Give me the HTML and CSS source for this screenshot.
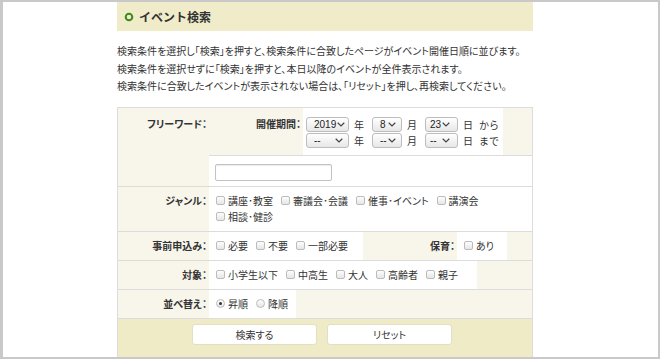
FILE: index.html
```html
<!DOCTYPE html>
<html lang="ja">
<head>
<meta charset="utf-8">
<title>イベント検索</title>
<link rel="stylesheet" href="styles.css">
</head>
<body>
<div class="frame">
  <div class="panel">
    <h2 class="title"><svg class="ring" width="10" height="10" viewBox="0 0 10 10"><circle cx="5" cy="5" r="3.3" fill="none" stroke="#3a8a1f" stroke-width="2"/></svg>イベント検索</h2>
    <p class="lead">検索条件を選択し「検索」を押すと、検索条件に合致したページがイベント開催日順に並びます。<br>検索条件を選択せずに「検索」を押すと、本日以降のイベントが全件表示されます。<br>検索条件に合致したイベントが表示されない場合は、「リセット」を押し、再検索してください。</p>
    <div class="form">
      <div class="row row-top">
        <div class="lbl lbl-top">フリーワード：</div>
        <div class="top-right">
          <div class="sub-a">
            <div class="lbl lbl-top lbl-mid">開催期間：</div>
            <div class="val val-period">
              <div class="dline">
                <span class="sel sel-y"><span class="sv">2019</span><svg class="chev" width="8" height="5" viewBox="0 0 8 5"><polyline points="0.7,0.8 4,4 7.3,0.8" fill="none" stroke="#444" stroke-width="1.2"/></svg></span><span class="unit">年</span>
                <span class="sel sel-m"><span class="sv">8</span><svg class="chev" width="8" height="5" viewBox="0 0 8 5"><polyline points="0.7,0.8 4,4 7.3,0.8" fill="none" stroke="#444" stroke-width="1.2"/></svg></span><span class="unit">月</span>
                <span class="sel sel-d"><span class="sv">23</span><svg class="chev" width="8" height="5" viewBox="0 0 8 5"><polyline points="0.7,0.8 4,4 7.3,0.8" fill="none" stroke="#444" stroke-width="1.2"/></svg></span><span class="unit unit-last">日</span><span class="tail">から</span>
              </div>
              <div class="dline">
                <span class="sel sel-y"><span class="sv">--</span><svg class="chev" width="8" height="5" viewBox="0 0 8 5"><polyline points="0.7,0.8 4,4 7.3,0.8" fill="none" stroke="#444" stroke-width="1.2"/></svg></span><span class="unit">年</span>
                <span class="sel sel-m"><span class="sv">--</span><svg class="chev" width="8" height="5" viewBox="0 0 8 5"><polyline points="0.7,0.8 4,4 7.3,0.8" fill="none" stroke="#444" stroke-width="1.2"/></svg></span><span class="unit">月</span>
                <span class="sel sel-d"><span class="sv">--</span><svg class="chev" width="8" height="5" viewBox="0 0 8 5"><polyline points="0.7,0.8 4,4 7.3,0.8" fill="none" stroke="#444" stroke-width="1.2"/></svg></span><span class="unit unit-last">日</span><span class="tail">まで</span>
              </div>
            </div>
            <div class="fill"></div>
          </div>
          <div class="val val-input"><span class="textbox"></span></div>
        </div>
      </div>

      <div class="row">
        <div class="lbl">ジャンル：</div>
        <div class="val val-grow checks">
          <span class="chk"><span class="cb"></span>講座･教室</span>
          <span class="chk"><span class="cb"></span>審議会･会議</span>
          <span class="chk"><span class="cb"></span>催事･イベント</span>
          <span class="chk"><span class="cb"></span>講演会</span>
          <span class="brk"></span>
          <span class="chk"><span class="cb"></span>相談･健診</span>
        </div>
      </div>

      <div class="row">
        <div class="lbl">事前申込み：</div>
        <div class="val val-apply checks">
          <span class="chk"><span class="cb"></span>必要</span>
          <span class="chk"><span class="cb"></span>不要</span>
          <span class="chk"><span class="cb"></span>一部必要</span>
        </div>
        <div class="lbl lbl-mid">保育：</div>
        <div class="val val-care checks">
          <span class="chk"><span class="cb"></span>あり</span>
        </div>
        <div class="fill"></div>
      </div>

      <div class="row">
        <div class="lbl">対象：</div>
        <div class="val val-target checks">
          <span class="chk"><span class="cb"></span>小学生以下</span>
          <span class="chk"><span class="cb"></span>中高生</span>
          <span class="chk"><span class="cb"></span>大人</span>
          <span class="chk"><span class="cb"></span>高齢者</span>
          <span class="chk"><span class="cb"></span>親子</span>
        </div>
        <div class="fill"></div>
      </div>

      <div class="row">
        <div class="lbl">並べ替え：</div>
        <div class="val val-sort checks">
          <span class="chk"><span class="rb rb-on"></span>昇順</span>
          <span class="chk"><span class="rb"></span>降順</span>
        </div>
        <div class="fill"></div>
      </div>

      <div class="btns">
        <button class="btn" type="button">検索する</button>
        <button class="btn" type="button">リセット</button>
      </div>
    </div>
  </div>
</div>
</body>
</html>
```

FILE: styles.css
```css
html, body {
  margin: 0;
  padding: 0;
  background: #fff;
}

body {
  font-family: "Noto Sans CJK JP", "Noto Sans", sans-serif;
  color: #333;
  font-size: 10px;
}

.frame {
  width: 660px;
  height: 359px;
  box-sizing: border-box;
  border: 2px solid #c9c9c9;
  border-left-width: 3px;
  overflow: hidden;
}

.panel {
  margin-left: 114px;
  width: 416px;
}

.title {
  margin: 0;
  height: 29px;
  background: #f0ecca;
  display: flex;
  align-items: center;
  padding-left: 7px;
  font-size: 12px;
  font-weight: bold;
  color: #333;
}

.ring {
  margin-right: 5px;
  display: block;
}

.lead {
  margin: 11px 0 12.5px;
  font-size: 10px;
  line-height: 17.5px;
  font-feature-settings: "palt";
  white-space: nowrap;
}

.form {
  border: 1px solid #dcdcdc;
  border-bottom: none;
  background: #f8f6eb;
}

.row {
  display: flex;
  border-top: 1px solid #dcdcdc;
}

.row-top {
  border-top: none;
}

.lbl {
  width: 91px;
  flex: none;
  text-align: right;
  font-weight: bold;
  font-size: 10px;
  line-height: 16px;
  padding: 6px 0 6px;
  font-feature-settings: "palt";
  box-sizing: border-box;
  padding-right: 2px;
}

.lbl-top {
  padding-top: 8px;
}

.lbl-mid {
  width: 94px;
}

.top-right {
  flex: 1;
  display: flex;
  flex-direction: column;
}

.sub-a {
  display: flex;
  height: 47px;
}

.val {
  background: #fff;
  line-height: 16px;
  padding: 6px 0 6px 7px;
  box-sizing: border-box;
  flex: none;
}

.val-period {
  width: 200px;
  padding: 9px 0 0 3px;
  display: flex;
  flex-direction: column;
  gap: 1px;
}

.fill {
  flex: 1;
}

.dline {
  display: flex;
  align-items: center;
  height: 15px;
}

.sel {
  display: flex;
  align-items: center;
  height: 15px;
  box-sizing: border-box;
  border: 1px solid #bdbdbd;
  border-radius: 3px;
  background: linear-gradient(#ffffff, #e7e7e7);
  font-family: "Liberation Sans", Arial, sans-serif;
  font-size: 10px;
  color: #222;
  padding: 0 5px 0 6px;
  flex: none;
}

.sel .sv {
  white-space: nowrap;
  margin-right: 1px;
}

.sel .chev {
  margin-left: auto;
  display: block;
  flex: none;
}

.sel-y { width: 43px; padding-left: 7px; }
.sel-m { width: 30px; padding-left: 7px; }
.sel-d { width: 33px; padding-left: 4px; padding-right: 7px; }

.unit {
  margin: 0 8px 0 5px;
  line-height: 15px;
}

.unit-last {
  margin-right: 6px;
}

.tail {
  line-height: 15px;
}

.val-input {
  border-top: 1px solid #dcdcdc;
  height: 31px;
  padding: 8px 0 0 6px;
  flex: none;
}

.textbox {
  display: block;
  width: 117px;
  height: 17px;
  box-sizing: border-box;
  border: 1px solid #c2c2c2;
  border-radius: 2px;
  background: #fff;
  box-shadow: inset 0 1px 1px rgba(0, 0, 0, 0.08);
}

.checks {
  display: flex;
  flex-wrap: wrap;
  align-content: flex-start;
  column-gap: 8px;
}

.val-grow {
  flex: 1;
}

.val-apply { width: 154px; }
.val-care { width: 50px; }
.val-target { width: 268px; }
.val-sort { width: 87px; }

.brk {
  flex-basis: 100%;
  height: 0;
}

.chk {
  display: flex;
  align-items: center;
  height: 16px;
  font-feature-settings: "palt";
  white-space: nowrap;
}

.cb {
  width: 9px;
  height: 9px;
  box-sizing: border-box;
  border: 1px solid #bcbcbc;
  border-radius: 2px;
  background: linear-gradient(#fdfdfd, #e6e6e6);
  margin-right: 3px;
  position: relative;
  top: -1px;
  flex: none;
}

.rb {
  width: 9px;
  height: 9px;
  box-sizing: border-box;
  border: 1px solid #bcbcbc;
  border-radius: 50%;
  background: linear-gradient(#fdfdfd, #e6e6e6);
  margin-right: 3px;
  position: relative;
  top: -1px;
  flex: none;
  display: flex;
  align-items: center;
  justify-content: center;
}

.rb-on::after {
  content: "";
  width: 3px;
  height: 3px;
  border-radius: 50%;
  background: #333;
}

.btns {
  border-top: 1px solid #dcdcdc;
  background: #efebc6;
  height: 40px;
  display: flex;
  justify-content: center;
  gap: 10px;
  padding: 5px 6px 0 0;
  box-sizing: border-box;
}

.btn {
  width: 125px;
  height: 21px;
  background: #fff;
  border: 1px solid #e2dfc4;
  border-radius: 3px;
  font-family: "Noto Sans CJK JP", sans-serif;
  font-size: 10px;
  color: #333;
  padding: 0;
  font-feature-settings: "palt";
}
```
